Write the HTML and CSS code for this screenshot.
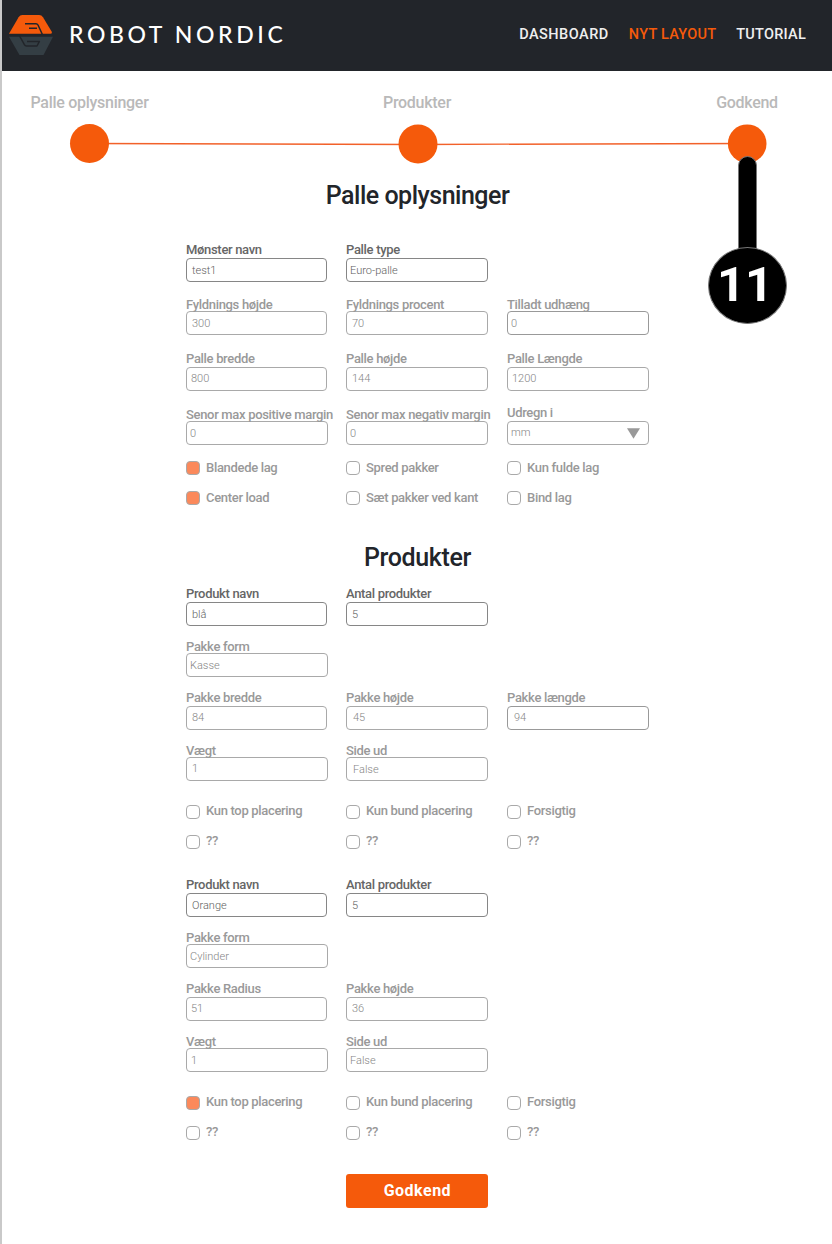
FILE: index.html
```html
<!DOCTYPE html>
<html lang="da">
<head>
<meta charset="utf-8">
<title>Robot Nordic</title>
<link rel="stylesheet" href="styles.css">
</head>
<body>
<header class="topbar">
  <div class="brand">
    <svg class="logo" width="46" height="42" viewBox="8 14 46 42">
      <path fill="#f55a0b" d="M9 33.8 L18.6 17.2 Q20 15 22.4 15 H39.2 Q41.6 15 43 17.2 L51.6 31.6 Q52.6 33.8 50.4 33.8 Z"/>
      <path fill="none" stroke="#22252a" stroke-width="1.5" stroke-linejoin="round" d="M25 23.7 H36 Q37.3 23.7 38 25 L42.4 34.5 M29 28.2 H37"/>
      <path fill="#343e44" d="M9 36.8 H53 L43.5 55 H19.5 Z"/>
      <path fill="none" stroke="#22252a" stroke-width="1.5" stroke-linejoin="round" d="M19.6 36 L24.4 44.7 Q25.1 46 26.4 46 H37 L39.4 41.4 H27"/>
    </svg>
    <span class="brand-name">ROBOT NORDIC</span>
  </div>
  <nav class="nav">
    <a class="nav-wide">DASHBOARD</a><a class="active">NYT LAYOUT</a><a>TUTORIAL</a>
  </nav>
</header>

<section class="stepper">
  <div class="step-labels"><span>Palle oplysninger</span><span>Produkter</span><span>Godkend</span></div>
  <svg class="track" width="700" height="42" viewBox="68 122 700 42">
    <path stroke="#f2612a" stroke-width="1.3" fill="none" d="M90 143.5 L418 144.5 L747 143.5"/>
    <g fill="#f55a0b"><circle cx="89.5" cy="143.5" r="19.5"/><circle cx="418" cy="144" r="19.5"/><circle cx="747.2" cy="143.7" r="19.3"/></g>
  </svg>
  <div class="marker"><div class="marker-stem"></div><div class="marker-ball">11</div></div>
</section>

<main class="form">
  <h1>Palle oplysninger</h1>
  <div class="row first strong">
    <div class="field narrow"><label>Mønster navn</label><div class="box p5">test1</div></div>
    <div class="field"><label>Palle type</label><div class="box p3">Euro-palle</div></div>
  </div>
  <div class="row g14">
    <div class="field tight narrow"><label>Fyldnings højde</label><div class="box p5">300</div></div>
    <div class="field tight"><label>Fyldnings procent</label><div class="box p5">70</div></div>
    <div class="field tight edge"><label>Tilladt udhæng</label><div class="box p3">0</div></div>
  </div>
  <div class="row g15">
    <div class="field narrow"><label>Palle bredde</label><div class="box high p4">800</div></div>
    <div class="field"><label>Palle højde</label><div class="box high p5">144</div></div>
    <div class="field"><label>Palle Længde</label><div class="box high p4">1200</div></div>
  </div>
  <div class="row g13">
    <div class="field tight"><label>Senor max positive margin</label><div class="box p3">0</div></div>
    <div class="field tight"><label>Senor max negativ margin</label><div class="box p3">0</div></div>
    <div class="field"><label>Udregn i</label><div class="box p3 select">mm<svg width="13" height="11" viewBox="0 0 13 11"><path fill="#999" d="M0 .3H13L6.5 10.7Z"/></svg></div></div>
  </div>
  <div class="row checks g16">
    <div class="check on"><i></i>Blandede lag</div><div class="check"><i></i>Spred pakker</div><div class="check"><i></i>Kun fulde lag</div>
  </div>
  <div class="row checks g16">
    <div class="check on"><i></i>Center load</div><div class="check"><i></i>Sæt pakker ved kant</div><div class="check"><i></i>Bind lag</div>
  </div>

  <h2>Produkter</h2>
  <article class="product">
    <div class="row strong">
      <div class="field narrow"><label>Produkt navn</label><div class="box p5">blå</div></div>
      <div class="field"><label>Antal produkter</label><div class="box p5">5</div></div>
    </div>
    <div class="row g12">
      <div class="field tight"><label>Pakke form</label><div class="box p3">Kasse</div></div>
    </div>
    <div class="row g12">
      <div class="field narrow"><label>Pakke bredde</label><div class="box high p5">84</div></div>
      <div class="field"><label>Pakke højde</label><div class="box high p6">45</div></div>
      <div class="field edge"><label>Pakke længde</label><div class="box high p6">94</div></div>
    </div>
    <div class="row g12">
      <div class="field tight"><label>Vægt</label><div class="box high p5">1</div></div>
      <div class="field tight"><label>Side ud</label><div class="box p6">False</div></div>
    </div>
    <div class="row checks raised g24">
      <div class="check"><i></i>Kun top placering</div><div class="check"><i></i>Kun bund placering</div><div class="check"><i></i>Forsigtig</div>
    </div>
    <div class="row checks raised g16">
      <div class="check"><i></i>??</div><div class="check"><i></i>??</div><div class="check"><i></i>??</div>
    </div>
  </article>
  <article class="product">
    <div class="row strong">
      <div class="field narrow"><label>Produkt navn</label><div class="box p5">Orange</div></div>
      <div class="field"><label>Antal produkter</label><div class="box p5">5</div></div>
    </div>
    <div class="row g12">
      <div class="field tight"><label>Pakke form</label><div class="box p3">Cylinder</div></div>
    </div>
    <div class="row g12">
      <div class="field narrow"><label>Pakke Radius</label><div class="box high p4">51</div></div>
      <div class="field"><label>Pakke højde</label><div class="box high p5">36</div></div>
    </div>
    <div class="row g12">
      <div class="field tight"><label>Vægt</label><div class="box p4">1</div></div>
      <div class="field tight"><label>Side ud</label><div class="box p3">False</div></div>
    </div>
    <div class="row checks raised g24">
      <div class="check on"><i></i>Kun top placering</div><div class="check"><i></i>Kun bund placering</div><div class="check"><i></i>Forsigtig</div>
    </div>
    <div class="row checks raised g16">
      <div class="check"><i></i>??</div><div class="check"><i></i>??</div><div class="check"><i></i>??</div>
    </div>
  </article>
  <button class="approve" type="button">Godkend</button>
</main>
</body>
</html>
```
FILE: styles.css
```css
* { box-sizing: border-box; }
body {
  margin: 0;
  height: 1244px;
  border-left: 2px solid #c9c9c9;
  background: #fff;
  font-family: Roboto, "Liberation Sans", sans-serif;
  overflow: hidden;
}
.topbar {
  height: 71px;
  padding: 0 26px 3px 6px;
  background: #22252a;
  display: flex;
  align-items: center;
  justify-content: space-between;
}
.brand { display: flex; align-items: center; gap: 15px; }
.logo { display: block; margin-top: 2px; }
.brand-name {
  padding-bottom: 1px;
  font: 500 23px/30px Lato, sans-serif;
  letter-spacing: 3.6px;
  color: #fff;
}
.nav {
  display: flex;
  gap: 20px;
  font-size: 14.5px;
  font-weight: 500;
  letter-spacing: .25px;
  color: #efefef;
}
.nav-wide { letter-spacing: .5px; }
.nav .active { color: #f55a0b; }

.stepper { position: relative; height: 93px; padding-top: 22px; }
.step-labels {
  display: grid;
  grid-template-columns: 175px 1fr 175px;
  text-align: center;
  font-size: 16px;
  line-height: 20px;
  font-weight: 500;
  letter-spacing: -.28px;
  color: #b9b9b9;
}
.step-labels span:last-child { padding-left: 5px; }
.track { display: block; margin: 9px 0 0 66px; }
.marker {
  position: absolute;
  left: 706px;
  top: 85px;
  width: 79px;
  display: flex;
  flex-direction: column;
  align-items: center;
}
.marker-stem {
  width: 19px;
  height: 96px;
  margin-bottom: -5px;
  border: 1px solid #777;
  border-radius: 10px 10px 0 0;
  background: #000;
}
.marker-ball {
  width: 79px;
  height: 77px;
  padding-right: 5px;
  border: 1px solid #777;
  border-radius: 50%;
  background: #000;
  color: #fff;
  font: bold 49px/73px Roboto, sans-serif;
  text-align: center;
}

.form { padding-left: 184px; }
h1, h2 {
  width: 463px;
  margin: 0;
  text-align: center;
  font-size: 25px;
  font-weight: 500;
  line-height: 32px;
  letter-spacing: -.5px;
  color: #22252a;
}
h1 { padding-top: 16px; }
h2 { margin: 37px 0 11px; letter-spacing: -.35px; }
.row {
  display: grid;
  grid-template-columns: 160px 161px 142px;
  align-items: end;
  color: #999;
}
.first { margin-top: 29px; }
.g12 { margin-top: 12px; }
.g13 { margin-top: 13px; }
.g14 { margin-top: 14px; }
.g15 { margin-top: 15px; }
.g16 { margin-top: 16px; }
.g24 { margin-top: 24px; }
.field { width: 142px; }
.narrow { width: 141px; }
label {
  display: block;
  height: 17px;
  line-height: 17px;
  font-size: 13px;
  font-weight: 500;
  letter-spacing: -.32px;
  white-space: nowrap;
}
.tight label { height: 15px; }
.box {
  height: 24px;
  border: 1px solid #a9a9a9;
  border-radius: 4px;
  font-size: 11px;
  font-weight: 300;
  line-height: 24px;
  color: #858585;
}
.box.high { line-height: 22px; }
.edge .box { border-color: #999; }
.strong { color: #666; }
.strong .box { border-color: #868686; color: #606060; }
.p3 { padding-left: 3px; }
.p4 { padding-left: 4px; }
.p5 { padding-left: 5px; }
.p6 { padding-left: 6px; }
.select {
  display: flex;
  align-items: center;
  justify-content: space-between;
  padding-right: 8px;
}
.check {
  display: flex;
  align-items: center;
  gap: 6px;
  height: 14px;
  font-size: 13px;
  font-weight: 500;
  line-height: 14px;
  letter-spacing: -.32px;
}
.check i {
  width: 14px;
  height: 14px;
  border: 1px solid #a9a9a9;
  border-radius: 4px;
}
.check.on i { background: #fb895b; }
.raised .check { line-height: 12px; align-items: flex-start; }
.product + .product { margin-top: 27px; }
.approve {
  display: block;
  width: 142px;
  height: 34px;
  margin: 34px 0 0 160.4px;
  padding: 0;
  border: 0;
  border-radius: 3px;
  background: #f55a0b;
  color: #fff;
  font: bold 16px/34px Roboto, sans-serif;
  letter-spacing: .5px;
}
```
